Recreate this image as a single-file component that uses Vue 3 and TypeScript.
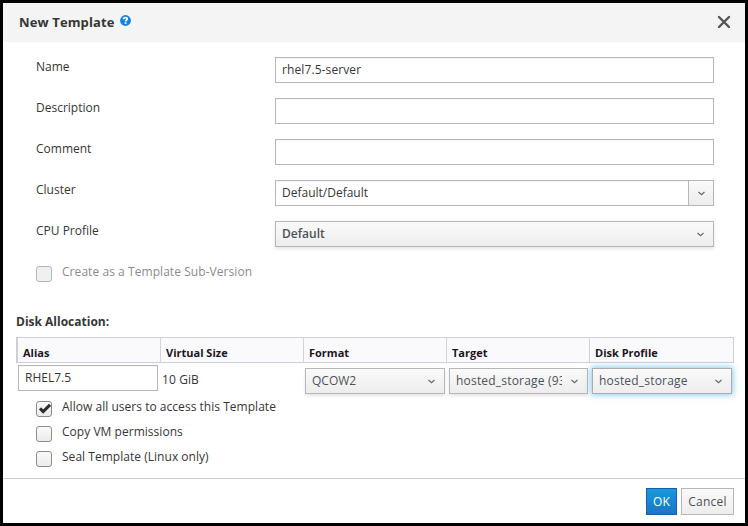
<script setup lang="ts">
import { ref } from 'vue'

interface Field {
  label: string
  kind: 'text' | 'combo' | 'select'
  value: string
}

interface Option {
  label: string
  checked: boolean
}

const fields = ref<Field[]>([
  { label: 'Name', kind: 'text', value: 'rhel7.5-server' },
  { label: 'Description', kind: 'text', value: '' },
  { label: 'Comment', kind: 'text', value: '' },
  { label: 'Cluster', kind: 'combo', value: 'Default/Default' },
  { label: 'CPU Profile', kind: 'select', value: 'Default' },
])

const columns: string[] = ['Alias', 'Virtual Size', 'Format', 'Target', 'Disk Profile']
const diskSelects: string[] = ['QCOW2', 'hosted_storage (93', 'hosted_storage']

const options = ref<Option[]>([
  { label: 'Allow all users to access this Template', checked: true },
  { label: 'Copy VM permissions', checked: false },
  { label: 'Seal Template (Linux only)', checked: false },
])
</script>

<template>
  <div class="dialog">
    <header class="header">
      <h1 class="title">New Template</h1>
      <svg class="help" viewBox="0 0 11 11">
        <circle cx="5.5" cy="5.5" r="5.4" fill="#1583dc" />
        <path d="M3.5 4.3C3.5 2.2 7.4 2.2 7.3 4.1C7.2 5.2 5.6 5.2 5.6 6.6" fill="none" stroke="#fff" stroke-width="1.7" />
        <rect x="4.7" y="7.3" width="1.8" height="1.6" fill="#fff" />
      </svg>
      <svg class="close" viewBox="0 0 14 14">
        <path d="M2 2L12 12M12 2L2 12" stroke="#555" stroke-width="2.4" stroke-linecap="round" />
      </svg>
    </header>

    <main class="body">
      <div v-for="field in fields" :key="field.label" class="row">
        <span class="label">{{ field.label }}</span>
        <div class="control" :class="field.kind">
          <span class="value">{{ field.value }}</span>
          <span v-if="field.kind !== 'text'" class="arrow">
            <svg class="chevron" viewBox="0 0 7 5"><path d="M.5 1L3.5 3.7L6.5 1" /></svg>
          </span>
        </div>
      </div>

      <div class="option disabled">
        <span class="box"></span>
        <span class="option-label">Create as a Template Sub-Version</span>
      </div>

      <section class="disks">
        <h2 class="heading">Disk Allocation:</h2>
        <div class="grid head">
          <span v-for="column in columns" :key="column" class="th">{{ column }}</span>
        </div>
        <div class="grid cells">
          <div class="control text alias"><span class="value">RHEL7.5</span></div>
          <span class="size">10 GiB</span>
          <div
            v-for="(name, i) in diskSelects"
            :key="i"
            class="control select small"
            :class="{ target: i === 1, focused: i === 2 }"
          >
            <span class="value">{{ name }}</span>
            <span class="arrow">
              <svg class="chevron" viewBox="0 0 7 5"><path d="M.5 1L3.5 3.7L6.5 1" /></svg>
            </span>
          </div>
        </div>
      </section>

      <div class="options">
        <div v-for="option in options" :key="option.label" class="option" @click="option.checked = !option.checked">
          <span class="box">
            <svg v-if="option.checked" class="check" viewBox="0 0 14 14">
              <path d="M3 6.4L6.2 9.6L13 2.8" fill="none" stroke="#292e34" stroke-width="3" />
            </svg>
          </span>
          <span class="option-label">{{ option.label }}</span>
        </div>
      </div>
    </main>

    <footer class="footer">
      <button class="btn primary">OK</button>
      <button class="btn">Cancel</button>
    </footer>
  </div>
</template>

<style>
body {
  background: #fff;
}
</style>

<style scoped>
.dialog {
  box-sizing: border-box;
  width: 748px;
  height: 526px;
  border: 3px solid #000;
  background: #fff;
  color: #363636;
  font: 12px/16px 'Open Sans', 'Noto Sans', sans-serif;
  display: flex;
  flex-direction: column;
  overflow: hidden;
}
.header {
  height: 39px;
  flex: none;
  box-sizing: border-box;
  background: #f4f4f4;
  display: flex;
  align-items: center;
  padding: 0 14px 2px 16px;
}
.title {
  margin: 0;
  font-size: 13px;
  font-weight: 700;
  letter-spacing: 0.12px;
}
.help {
  width: 11px;
  height: 11px;
  margin: 0 0 2px 5px;
}
.close {
  width: 14px;
  height: 14px;
  margin-left: auto;
}
.body {
  flex: 1;
  padding-top: 15px;
}
.row {
  display: flex;
  height: 26px;
  margin: 0 0 15px 33px;
}
.label {
  width: 239px;
  margin-top: 2px;
}
.control {
  box-sizing: border-box;
  width: 439px;
  height: 26px;
  border: 1px solid #b7b7b7;
  display: flex;
  min-width: 0;
  background: #fff;
  box-shadow: inset 0 1px 1px rgba(0, 0, 0, 0.04);
}
.value {
  flex: 1;
  min-width: 0;
  overflow: hidden;
  white-space: nowrap;
  padding-top: 4px;
  margin-left: 6px;
}
.text .value {
  letter-spacing: 0.1px;
}
.arrow {
  width: 25px;
  flex: none;
  box-sizing: border-box;
  display: flex;
  align-items: center;
  justify-content: center;
}
.combo .arrow {
  border-left: 1px solid #b7b7b7;
  background: linear-gradient(#fafafa, #ededed);
}
.chevron {
  width: 7px;
  height: 5px;
}
.chevron path {
  fill: none;
  stroke: #6b6d75;
  stroke-width: 1.3;
}
.select {
  background: linear-gradient(#fafafa, #ededed);
  box-shadow: 0 2px 3px rgba(0, 0, 0, 0.1);
  color: #4d5258;
  font-weight: 600;
}
.option {
  display: flex;
  height: 16px;
  margin: 0 0 9px 33px;
}
.box {
  box-sizing: border-box;
  width: 16px;
  height: 16px;
  border: 1px solid #8d8d85;
  border-radius: 3px;
  background: linear-gradient(#fafafa, #ebebeb);
  margin-right: 10px;
}
.check {
  display: block;
  width: 14px;
  height: 14px;
}
.option-label {
  margin-top: -2px;
  letter-spacing: 0.03px;
}
.disabled {
  margin-top: 19px;
  margin-bottom: 0;
  color: #8b8b8b;
}
.disabled .option-label {
  letter-spacing: 0.06px;
}
.disabled .box {
  border-color: #b5b5b5;
  background: #f0f0f0;
}
.disks {
  margin: 32px 12px 0 13px;
}
.heading {
  margin: 0 0 7px;
  font-size: 12px;
  line-height: 16px;
  font-weight: 700;
}
.grid {
  display: grid;
  grid-template-columns: 144px 143px 143px 143px 1fr;
}
.head {
  box-sizing: border-box;
  width: 718px;
  height: 26px;
  border: 1px solid #cfcfd6;
  border-left-width: 2px;
  background: #fafafc;
  grid-template-columns: 143px 143px 143px 143px 1fr;
}
.th {
  padding: 7px 0 0 5px;
  font-size: 11px;
  line-height: 15px;
  font-weight: 700;
  color: #1b1623;
}
.th + .th {
  border-left: 1px solid #d3d3e0;
  margin-left: -1px;
}
.cells {
  height: 31px;
}
.cells .control {
  width: 140px;
}
.cells .alias {
  margin: 2px 0 0 2px;
}
.alias .value {
  padding-top: 4px;
  letter-spacing: 0;
}
.size {
  margin: 9px 0 0 2px;
  letter-spacing: 0.1px;
}
.cells .small {
  margin: 5px 0 0 2px;
  font-weight: 500;
}
.cells .small + .small {
  margin-left: 3px;
}
.cells .target {
  width: 139px;
}
.target .value,
.focused .value {
  letter-spacing: 0.2px;
}
.cells .small.focused {
  border-color: #aaaeb2;
  box-shadow: 0 0 6px 1px rgba(70, 175, 230, 0.65);
}
.options {
  margin-top: 7px;
}
.footer {
  flex: none;
  box-sizing: border-box;
  height: 45px;
  border-top: 1px solid #cfcfcf;
  display: flex;
  justify-content: flex-end;
  gap: 4px;
  padding: 9px 11px 0 0;
}
.btn {
  box-sizing: border-box;
  width: 53px;
  height: 27px;
  padding: 0;
  border: 1px solid #b7b7b7;
  background: linear-gradient(#fafafa, #ededed);
  color: #4d5258;
  font: 500 12px/16px 'Open Sans', 'Noto Sans', sans-serif;
  letter-spacing: 0.2px;
}
.primary {
  width: 31px;
  border-color: #1461a8;
  background: linear-gradient(#189ad8, #1b74c8);
  color: #fff;
}
</style>
